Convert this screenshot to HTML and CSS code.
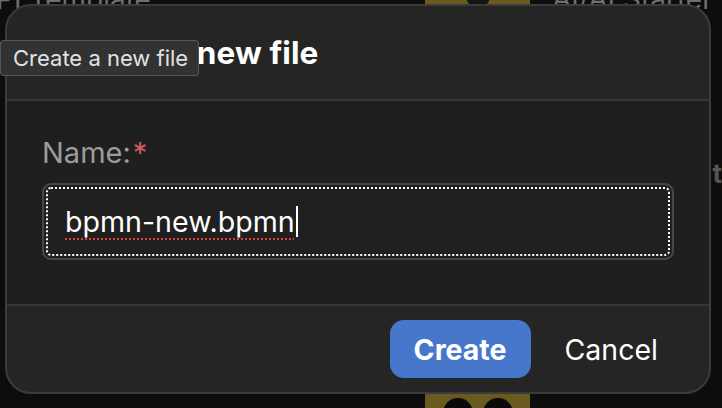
FILE: index.html
```html
<!DOCTYPE html>
<html lang="en">
<head>
<meta charset="utf-8">
<title>Create a new file</title>
<link rel="stylesheet" href="styles.css">
</head>
<body>
<div class="workspace">
  <div class="col col-left">
    <div class="card-title">PI Template</div>
    <div class="side-letter">r</div>
  </div>
  <div class="col col-mid">
    <div class="tile tile-top"><span class="dot"></span></div>
    <div class="tile tile-bottom"><span class="dot"></span><span class="dot"></span></div>
  </div>
  <div class="col col-right">
    <div class="card-title">AI/AI Starter</div>
    <div class="side-letter bold">t</div>
  </div>
</div>

<div class="dialog" role="dialog" aria-labelledby="dlg-title">
  <header class="dialog-header">
    <h1 id="dlg-title" class="dialog-title">Create a new file</h1>
  </header>
  <section class="dialog-body">
    <label class="field-label" for="fname">Name:<span class="required">*</span></label>
    <div class="field-input" id="fname">
      <span class="field-text">bpmn-new.bpmn</span><span class="caret"></span>
    </div>
  </section>
  <footer class="dialog-footer">
    <button class="btn btn-primary">Create</button>
    <button class="btn btn-ghost">Cancel</button>
  </footer>
</div>

<div class="tooltip">Create a new file</div>
</body>
</html>
```

FILE: styles.css
```css
* { box-sizing: border-box; }

html, body {
  margin: 0;
  padding: 0;
  width: 722px;
  height: 408px;
  overflow: hidden;
  background: #0d0d0d;
  font-family: Inter, "Noto Sans", sans-serif;
}

/* background workspace (mostly covered by the modal) */
.workspace {
  display: flex;
  height: 408px;
}
.col { position: relative; }
.col-left { width: 425px; }
.col-mid {
  width: 105px;
  display: flex;
  flex-direction: column;
  justify-content: space-between;
}
.col-right { flex: 1; padding-left: 22px; }

.card-title {
  color: #6f6f6f;
  font-size: 28px;
  line-height: 28px;
  margin-top: -15px;
  white-space: nowrap;
}
.col-left .card-title { margin-left: -4px; }

.side-letter {
  color: #555;
  font-size: 26px;
  margin-top: 150px;
  text-align: right;
}
.side-letter.bold { font-weight: 700; text-align: right; margin-top: 145px; }

.tile {
  background: #6b5a1f;
  display: flex;
  justify-content: center;
  gap: 10px;
  overflow: hidden;
}
.tile-top { height: 5px; align-items: flex-start; }
.tile-top .dot { width: 24px; height: 24px; border-radius: 50%; background: #151515; margin-top: -16px; }
.tile-bottom { height: 16px; align-items: flex-end; }
.tile-bottom .dot { width: 30px; height: 30px; border-radius: 50%; background: #0a0a0a; margin-bottom: -20px; }

/* modal */
.dialog {
  position: absolute;
  left: 5px;
  top: 4px;
  width: 706px;
  height: 390px;
  border: 2px solid #3b3b3b;
  border-radius: 26px;
  background: #252525;
  overflow: hidden;
  display: flex;
  flex-direction: column;
}

.dialog-header {
  height: 95px;
  border-bottom: 2px solid #373737;
  display: flex;
  align-items: center;
  padding: 0 36px 0 53px;
}
.dialog-title {
  margin: 0;
  color: #ffffff;
  font-size: 31.5px;
  font-weight: 700;
  letter-spacing: 0.1px;
}

.dialog-body {
  height: 205px;
  background: #1f1f1f;
  border-bottom: 2px solid #373737;
  padding: 34px 35px 0 35px;
  display: flex;
  flex-direction: column;
}
.field-label {
  color: #9c9c9c;
  font-size: 29px;
  line-height: 36px;
  margin-left: 0;
}
.required { color: #c9605e; margin-left: 2px; }

.field-input {
  margin-top: 12px;
  height: 77px;
  border: 2px solid #474747;
  border-radius: 9px;
  background: #202020;
  outline: 2px dotted #ffffff;
  outline-offset: -6px;
  display: flex;
  align-items: center;
  padding-left: 21px;
}
.field-text {
  color: #ffffff;
  font-size: 28.6px;
  text-decoration: underline dotted #d2453a;
  text-decoration-thickness: 2px;
  text-underline-offset: 6px;
}
.caret {
  width: 2px;
  height: 31px;
  background: #ffffff;
  margin-left: 1px;
}

.dialog-footer {
  flex: 1;
  display: flex;
  justify-content: flex-end;
  align-items: center;
  gap: 12px;
  padding: 0 29px 0 0;
}
.btn {
  font-family: inherit;
  font-size: 28.5px;
  height: 58px;
  border: 0;
  border-radius: 14px;
  padding: 0 22px;
  color: #ffffff;
  background: transparent;
}
.btn-primary {
  background: #4677cb;
  font-weight: 700;
  width: 141px;
  padding: 0;
}
.btn-ghost { font-weight: 400; }

/* tooltip over the dialog title */
.tooltip {
  position: absolute;
  left: 0;
  top: 40px;
  width: 199px;
  height: 36px;
  background: #323232;
  border: 1px solid #575757;
  border-radius: 3px;
  color: #e2e2e2;
  font-size: 22px;
  line-height: 34px;
  padding-left: 12px;
  white-space: nowrap;
}
```
